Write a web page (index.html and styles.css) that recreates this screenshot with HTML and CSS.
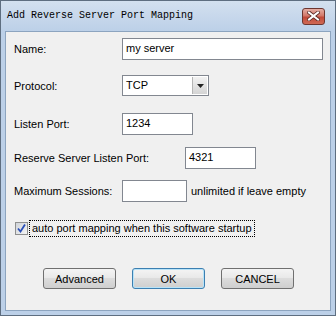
FILE: index.html
```html
<!DOCTYPE html>
<html lang="en">
  <head>
    <meta charset="UTF-8" />
    <title>Add Reverse Server Port Mapping</title>
    <link rel="stylesheet" href="styles.css">
  </head>
  <body>
    <div class="window">
      <div class="titlebar">
        <span class="title">Add Reverse Server Port Mapping</span>
        <span class="close">
          <svg width="13" height="10" viewBox="0 0 13 10">
            <path d="M2 1.5 L11 8.5 M11 1.5 L2 8.5" stroke="#5a2a25" stroke-width="3.6" stroke-linecap="square" />
            <path d="M2 1.5 L11 8.5 M11 1.5 L2 8.5" stroke="#ffffff" stroke-width="2" stroke-linecap="square" />
          </svg>
        </span>
      </div>

      <div class="client">
        <div class="row row-name">
          <label class="lbl">Name:</label>
          <div class="field field-name">my server</div>
        </div>

        <div class="row row-proto">
          <label class="lbl">Protocol:</label>
          <div class="combo">
            <span class="combo-text">TCP</span>
            <span class="combo-btn">
              <svg width="7" height="4" viewBox="0 0 7 4"><path d="M0 0 H7 L3.5 4 Z" fill="#222" /></svg>
            </span>
          </div>
        </div>

        <div class="row row-listen">
          <label class="lbl">Listen Port:</label>
          <div class="field field-port">1234</div>
        </div>

        <div class="row row-reserve">
          <label class="lbl lbl-wide">Reserve Server Listen Port:</label>
          <div class="field field-port">4321</div>
        </div>

        <div class="row row-max">
          <label class="lbl">Maximum Sessions:</label>
          <div class="field field-max"></div>
          <span class="hint">unlimited if leave empty</span>
        </div>

        <div class="row row-check">
          <span class="checkbox">
            <svg width="9" height="9" viewBox="0 0 9 9">
              <path d="M1 4.5 L3.5 7.5 L8 0.5" fill="none" stroke="#2a4fb8" stroke-width="1.8" />
            </svg>
          </span>
          <span class="check-text">auto port mapping when this software startup</span>
        </div>

        <div class="row row-buttons">
          <button class="btn">Advanced</button>
          <button class="btn btn-default">OK</button>
          <button class="btn">CANCEL</button>
        </div>
      </div>
    </div>
  </body>
</html>
```

FILE: styles.css
```css
/* dialog window, Win7 basic look */

body {
  margin: 0;
  background-color: #ffffff;
}

.window {
  width: 336px;
  height: 316px;
  box-sizing: border-box;
  border: 1px solid #5e6e80;
  background-color: #bcd0e8;
  padding: 0 4px 4px 4px;
  display: flex;
  flex-direction: column;
  font-family: "Liberation Sans", Arial, sans-serif;
  font-size: 11px;
  color: #000;
}

.titlebar {
  height: 28px;
  flex: none;
  display: flex;
  align-items: center;
  justify-content: space-between;
  background: linear-gradient(#d3e0ef, #bcd0e8);
  margin: 0 -4px;
  padding: 0 10px 2px 6px;
}

.title {
  font-family: "Liberation Mono", monospace;
  font-size: 10px;
  color: #000;
}

.close {
  width: 21px;
  height: 15px;
  border: 1px solid #6d3630;
  border-radius: 3px;
  background: linear-gradient(#e5aea4, #d2786a 45%, #c24a3a 55%, #cf6a55);
  display: flex;
  align-items: center;
  justify-content: center;
  margin-top: 2px;
}

.client {
  flex: 1;
  background-color: #f0f0f0;
  border: 1px solid #8ca4bf;
  padding: 0 0 0 8px;
  display: flex;
  flex-direction: column;
}

.row {
  display: flex;
  align-items: center;
}

.lbl {
  width: 108px;
  flex: none;
}

.lbl-wide {
  width: 171px;
}

.field {
  flex: none;
  height: 22px;
  box-sizing: border-box;
  border: 1px solid #828790;
  background-color: #fff;
  padding: 2px 3px;
  line-height: 14px;
}

.row-name { margin-top: 6px; }
.row-proto { margin-top: 15px; }
.row-listen { margin-top: 17px; }
.row-reserve { margin-top: 12px; }
.row-max { margin-top: 11px; }
.row-check { margin-top: 18px; padding-left: 1px; }
.row-buttons { margin-top: 31px; padding-left: 29px; gap: 16px; }

.field-name {
  width: 201px;
}

.field-port {
  width: 71px;
}

.field-max {
  width: 65px;
}

.hint {
  margin-left: 4px;
}

.combo {
  width: 87px;
  height: 21px;
  box-sizing: border-box;
  border: 1px solid #828790;
  background-color: #fff;
  display: flex;
}

.combo-text {
  flex: 1;
  padding: 2px 3px;
  line-height: 14px;
}

.combo-btn {
  width: 14px;
  margin: 1px;
  border-left: 1px solid #b5b5b5;
  background: linear-gradient(#f2f2f2, #d4d4d4);
  display: flex;
  align-items: center;
  justify-content: center;
}

.checkbox {
  width: 13px;
  height: 13px;
  box-sizing: border-box;
  border: 1px solid #8e8f8f;
  background: linear-gradient(135deg, #cfd3d9, #f4f4f4);
  display: flex;
  align-items: center;
  justify-content: center;
}

.check-text {
  margin-left: 1px;
  border: 1px dotted #000;
  padding: 1px 2px;
  line-height: 13px;
}

.btn {
  width: 73px;
  height: 21px;
  border: 1px solid #707070;
  border-radius: 3px;
  background: linear-gradient(#f4f4f4, #e9e9e9 45%, #dcdcdc 50%, #cfcfcf);
  font-family: "Liberation Sans", Arial, sans-serif;
  font-size: 11px;
  color: #000;
  padding: 0;
}

.btn-default {
  border-color: #3c7fb1;
  box-shadow: inset 0 0 0 1px #b8e3f8;
}
```
